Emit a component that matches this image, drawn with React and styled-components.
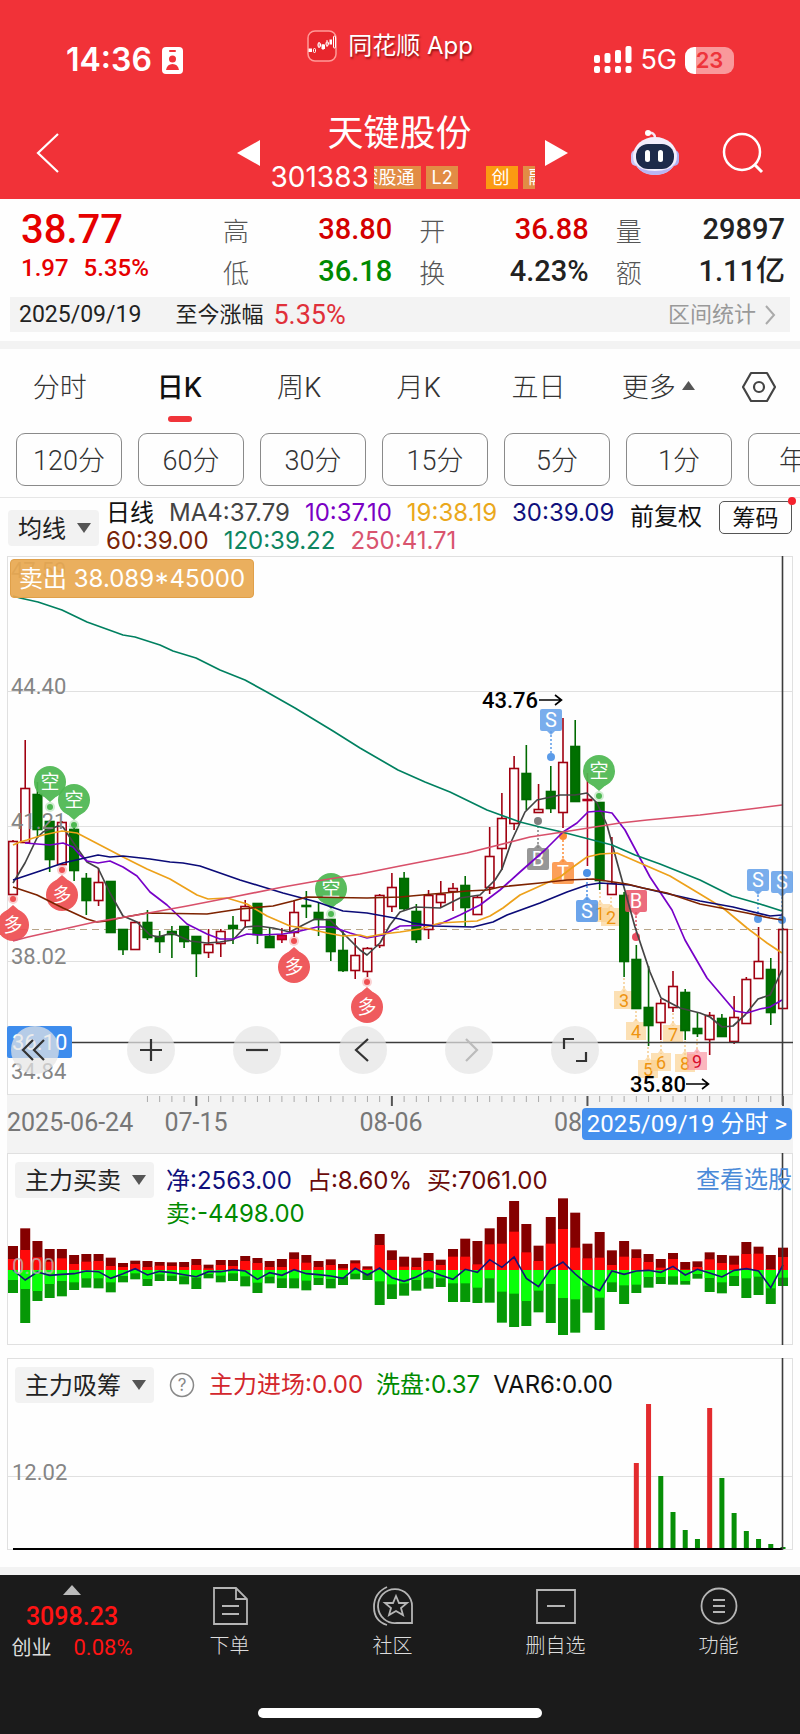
import { useState } from "react"
import styled, { createGlobalStyle, css } from "styled-components"

const UI = 'Inter, "Noto Sans CJK SC", sans-serif'
const NUM = 'Roboto, "Noto Sans CJK SC", sans-serif'

const RED = '#e60000'
const GREEN = '#008a00'

const quotes = [
  { label: '高', value: '38.80', color: '#d40000' },
  { label: '开', value: '36.88', color: '#d40000' },
  { label: '量', value: '29897' },
  { label: '低', value: '36.18', color: GREEN },
  { label: '换', value: '4.23%' },
  { label: '额', value: '1.11亿' },
]

const tabs = ['分时', '日K', '周K', '月K', '五日', '更多']
const periods = ['120分', '60分', '30分', '15分', '5分', '1分', '年K']

// high, body top, body bottom, low, kind (r = up, g = down, m = filled red)
const candles = [
  [840, 841, 895, 895, 'r'], [740, 788, 843, 843, 'r'], [782, 794, 830, 836, 'g'], [821, 821, 860, 872, 'g'],
  [821, 822, 865, 865, 'r'], [828, 829, 871, 881, 'g'], [873, 878, 901, 915, 'g'], [868, 882, 901, 906, 'r'],
  [881, 881, 933, 933, 'g'], [929, 929, 950, 955, 'g'], [921, 922, 950, 950, 'r'], [910, 922, 938, 940, 'g'],
  [931, 936, 942, 953, 'g'], [926, 931, 935, 958, 'g'], [926, 926, 942, 948, 'g'], [936, 936, 954, 977, 'g'],
  [929, 944, 953, 958, 'r'], [929, 931, 944, 957, 'r'], [916, 925, 929, 944, 'g'], [900, 906, 921, 928, 'r'],
  [903, 903, 935, 944, 'g'], [927, 936, 948, 948, 'g'], [928, 935, 940, 943, 'm'], [901, 912, 933, 937, 'r'],
  [891, 905, 907, 918, 'g'], [903, 912, 920, 936, 'g'], [919, 919, 952, 961, 'g'], [930, 950, 971, 972, 'g'],
  [938, 955, 971, 979, 'r'], [947, 948, 972, 977, 'r'], [894, 895, 946, 948, 'r'], [873, 887, 907, 912, 'r'],
  [872, 878, 909, 911, 'g'], [904, 911, 940, 943, 'g'], [890, 895, 930, 939, 'r'], [881, 894, 903, 908, 'r'],
  [883, 888, 892, 911, 'r'], [876, 885, 908, 926, 'g'], [895, 897, 915, 915, 'r'], [827, 856, 888, 894, 'r'],
  [793, 818, 849, 870, 'r'], [756, 768, 824, 830, 'r'], [745, 773, 800, 810, 'g'], [784, 809, 813, 813, 'r'],
  [766, 791, 809, 813, 'g'], [718, 762, 813, 828, 'r'], [720, 746, 802, 802, 'g'], [773, 799, 801, 866, 'm'],
  [802, 802, 881, 890, 'g'], [837, 883, 895, 895, 'r'], [892, 895, 962, 977, 'g'], [945, 959, 1009, 1009, 'g'],
  [966, 1007, 1026, 1046, 'g'], [999, 1003, 1023, 1040, 'r'], [971, 986, 1008, 1012, 'r'], [989, 992, 1031, 1040, 'g'],
  [1013, 1028, 1034, 1037, 'g'], [1012, 1015, 1040, 1055, 'r'], [1014, 1018, 1037, 1037, 'g'], [996, 1017, 1042, 1044, 'r'],
  [977, 979, 1024, 1024, 'r'], [927, 961, 979, 979, 'r'], [958, 969, 1013, 1025, 'g'], [928, 929, 1009, 1009, 'r'],
]

const averages = [
  { name: 'ma4', color: '#444', points: '13,883 25,863 37,838 43,832 58,826 63,827 75,845 87,862 98,868 110,893 123,916 137,922 150,935 158,937 172,933 190,941 207,943 220,942 233,940 245,927 258,926 273,928 290,932 303,925 315,919 330,920 345,935 360,950 367,955 380,943 390,925 400,912 415,907 440,908 460,898 480,895 495,880 502,869 512,840 525,812 537,800 560,795 575,795 587,793 597,803 607,825 617,862 635,927 650,972 661,998 680,1008 700,1013 710,1017 722,1027 733,1026 745,1015 758,999 770,995 775,985 782,970' },
  { name: 'ma10', color: '#7700c8', points: '25,843 50,845 63,843 73,847 80,855 87,861 98,863 110,861 123,867 137,876 150,892 167,905 187,924 207,934 220,939 233,939 247,934 260,935 283,934 300,931 317,927 333,927 350,933 367,938 383,935 400,926 433,925 440,924 460,915 480,905 500,890 520,872 545,850 563,832 577,823 588,812 600,811 612,813 625,830 650,877 672,910 685,940 707,978 735,1011 747,1013 760,1009 770,1007 782,1000' },
  { name: 'ma19', color: '#eda11a', points: '13,845 20,842 27,840 43,835 62,831 77,833 100,845 123,857 147,869 170,879 197,895 208,899 227,898 247,904 267,916 290,926 310,929 327,933 343,936 360,935 367,937 383,934 400,932 420,929 440,923 457,922 477,921 490,916 503,908 520,895 540,886 560,877 573,867 587,857 600,854 617,853 640,863 670,876 700,894 723,908 747,928 767,943 782,953' },
  { name: 'ma30', color: '#0b0b78', points: '13,880 40,871 63,863 98,855 110,857 123,856 150,859 170,862 183,863 200,866 240,880 260,886 283,893 317,902 343,911 367,913 400,919 413,923 433,926 473,927 493,922 507,915 540,903 567,892 587,885 600,883 630,885 660,892 700,901 733,907 770,916 782,915' },
  { name: 'ma60', color: '#7d2300', points: '13,887 37,895 63,908 87,919 97,922 107,921 120,918 147,913 207,914 220,912 240,909 273,906 293,901 307,897 367,898 400,897 433,894 467,891 487,890 500,887 540,883 567,880 593,879 627,884 643,888 667,893 700,904 747,913 770,918 782,920' },
  { name: 'ma120', color: '#008060', points: '13,596 20,598 38,602 62,610 87,622 123,635 135,637 160,645 173,651 196,658 220,670 245,680 265,691 295,708 333,731 360,748 398,770 425,782 450,792 487,810 520,822 540,827 562,832 585,838 612,845 635,855 660,864 700,880 732,896 760,904 782,911' },
  { name: 'ma250', color: '#d8506a', points: '13,941 28,937 95,922 143,914 187,906 233,897 283,887 317,881 360,874 400,866 467,853 530,837 563,832 620,823 647,820 700,815 750,809 782,805' },
]

const legend = [
  [
    { text: '日线', color: '#111' }, { text: 'MA4:37.79', color: '#444' }, { text: '10:37.10', color: '#7a00c4' },
    { text: '19:38.19', color: '#eaa81c' }, { text: '30:39.09', color: '#10107c' },
  ],
  [
    { text: '60:39.00', color: '#7a2408' }, { text: '120:39.22', color: '#0d8560' }, { text: '250:41.71', color: '#d9546e' },
  ],
]

const pins = [
  { x: 50, y: 782, dot: 807, up: true }, { x: 74, y: 800, dot: 825, up: true },
  { x: 331, y: 889, dot: 914, up: true }, { x: 599, y: 771, dot: 796, up: true },
  { x: 13, y: 925, dot: 899 }, { x: 62, y: 895, dot: 870 },
  { x: 294, y: 967, dot: 941 }, { x: 367, y: 1007, dot: 982 },
]

const trades = [
  { x: 551, y: 720, dot: 757, text: 'S', color: '#5b9be8' },
  { x: 538, y: 859, dot: 821, text: 'B', color: '#808080' },
  { x: 563, y: 873, dot: 836, text: 'T', color: '#fb8a35' },
  { x: 587, y: 911, dot: 873, text: 'S', color: '#4a90e6' },
  { x: 636, y: 901, dot: 937, text: 'B', color: '#e84c60' },
  { x: 758, y: 880, dot: 919, text: 'S', color: '#5b9be8' },
  { x: 782, y: 882, dot: 920, text: 'S', color: '#5b9be8' },
]

const counts = [
  { x: 600, y: 913, n: 1, from: 892 }, { x: 611, y: 917, n: 2, from: 897 }, { x: 624, y: 1000, n: 3, from: 978 },
  { x: 636, y: 1031, n: 4, from: 1011 }, { x: 648, y: 1069, n: 5, from: 1047 }, { x: 661, y: 1062, n: 6, from: 1041 },
  { x: 673, y: 1034, n: 7, from: 1013 }, { x: 685, y: 1063, n: 8, from: 1041 }, { x: 697, y: 1061, n: 9, from: 1039, hot: true },
]

// buy total, buy strong, sell strong, sell total, net line
const flows = [
  [72, 33, 30, 69, 0], [125, 60, 57, 159, 30], [87, 38, 63, 93, 6], [63, 25, 42, 84, 16], [63, 35, 33, 79, 13],
  [45, 18, 37, 60, 11], [48, 25, 25, 53, 3], [48, 27, 25, 55, 5], [37, 12, 37, 67, 25], [21, 9, 18, 37, 11],
  [28, 18, 10, 28, -4], [27, 9, 27, 48, 15], [24, 13, 13, 33, 4], [23, 12, 17, 33, 8], [24, 9, 19, 43, 14],
  [33, 15, 23, 57, 20], [16, 5, 12, 25, 5], [30, 15, 17, 37, 5], [30, 12, 10, 33, -1], [42, 27, 19, 49, 3],
  [36, 21, 38, 69, 28], [27, 9, 20, 40, 8], [33, 9, 25, 54, 16], [53, 33, 25, 55, -1], [45, 22, 32, 61, 11],
  [27, 9, 24, 45, 14], [32, 15, 27, 55, 18], [18, 5, 21, 45, 25], [29, 20, 11, 28, -5], [11, 4, 11, 30, 15],
  [108, 75, 34, 105, -6], [59, 30, 43, 87, 23], [40, 10, 40, 77, 34], [37, 9, 30, 62, 21], [51, 27, 23, 56, 1],
  [31, 15, 25, 51, 16], [63, 40, 40, 96, 28], [94, 40, 40, 96, -2], [87, 17, 53, 99, 7], [125, 77, 25, 98, -31],
  [159, 79, 65, 158, -8], [207, 115, 71, 171, -39], [138, 53, 93, 168, 25], [73, 27, 62, 127, 50], [159, 79, 42, 159, -3],
  [215, 123, 84, 195, -24], [172, 67, 88, 188, 12], [79, 35, 47, 128, 43], [114, 37, 83, 180, 62], [59, 15, 37, 66, 3],
  [87, 40, 46, 102, 13], [62, 36, 44, 69, 3], [48, 24, 21, 53, 1], [33, 7, 21, 42, 7], [51, 33, 19, 44, -11],
  [24, 2, 33, 44, 15], [26, 9, 12, 26, -2], [53, 32, 24, 66, 9], [45, 21, 37, 70, 21], [43, 16, 18, 48, 1],
  [84, 48, 25, 84, -4], [70, 49, 20, 75, 3], [45, 3, 55, 102, 53], [67, 39, 23, 48, -15],
]

const absorb = [
  [86, 'r'], [145, 'r'], [73, 'g'], [37, 'g'], [19, 'g'], [10, 'g'], [141, 'r'],
  [71, 'g'], [36, 'g'], [18, 'g'], [10, 'g'], [5, 'g'], [2, 'g'],
]

const STEP = 770 / 63
const px = i => 13 + i * STEP

const GlobalStyle = createGlobalStyle`
  * { box-sizing: border-box; }
  body { margin: 0; background: #fefefe; font-family: ${UI}; color: #222; }
  button, select { font: inherit; color: inherit; border: 0; background: none; padding: 0; cursor: pointer; }
  svg { display: block; }
`

const Header = styled.header`
  background: #f13238;
  color: #fff;
  height: 199px;
`
const StatusBar = styled.div`
  display: grid;
  grid-template-columns: 1fr auto 1fr;
  align-items: start;
  height: 110px;
  padding: 30px 62px 0 42px;
`
const Clock = styled.div`
  display: flex;
  align-items: center;
  gap: 10px;
  padding: 12px 0 0 24px;
  font-size: 32px;
  line-height: 36px;
  font-weight: 600;
`
const AppMark = styled.div`
  display: flex;
  align-items: center;
  gap: 11px;
  font-size: 24px;
  line-height: 32px;
  text-shadow: 1px 2px 2px rgba(90, 0, 0, .6);
`
const Signals = styled.div`
  display: flex;
  align-items: center;
  justify-content: flex-end;
  gap: 8px;
  padding: 12px 4px 0 0;
  font-size: 27px;
  line-height: 36px;
`
const Battery = styled.div`
  width: 49px;
  height: 27px;
  border-radius: 9px;
  background: linear-gradient(90deg, #fff 11px, #f9999b 11px);
  color: #ee343b;
  font-size: 22px;
  line-height: 27px;
  font-weight: 600;
  text-align: center;
`
const TitleRow = styled.div`
  display: grid;
  grid-template-columns: 235px 1fr 230px;
  align-items: center;
  height: 86px;
`
const Stock = styled.div`
  display: flex;
  align-items: center;
  justify-content: space-between;
`
const StockName = styled.h1`
  margin: 0 0 4px;
  padding-right: 6px;
  font-size: 36px;
  line-height: 44px;
  font-weight: 400;
  text-align: center;
`
const StockCode = styled.div`
  display: flex;
  align-items: center;
  width: 264px;
  height: 36px;
  gap: 2px;
  font-size: 28px;
`
const Tags = styled.div`
  display: flex;
  justify-content: flex-end;
  flex: 1;
  overflow: hidden;
`
const Tag = styled.span`
  flex: none;
  background: ${p => p.$hot ? '#fb9a12' : '#e28c45'};
  margin-left: ${p => p.$far ? 28 : 5}px;
  padding: 0 6px;
  width: ${p => p.$width}px;
  overflow: hidden;
  white-space: nowrap;
  direction: ${p => p.$clip ? 'rtl' : 'ltr'};
  font-size: 18px;
  line-height: 23px;
`
const IconButton = styled.button`
  display: flex;
  align-items: center;
`
const HeaderTools = styled.div`
  display: flex;
  align-items: center;
  justify-content: flex-end;
  gap: 42px;
  padding-right: 36px;
`
const BackWrap = styled.div`
  padding-left: 36px;
`

const Quote = styled.section`
  padding: 4px 10px 9px;
  border-bottom: 8px solid #f3f3f3;
`
const QuoteGrid = styled.div`
  display: grid;
  grid-template-columns: 186px 1fr;
  column-gap: 27px;
  height: 94px;
  padding-right: 5px;
`
const Price = styled.div`
  padding: 5px 0 0 11px;
  color: ${RED};
  font-family: ${NUM};
  font-weight: 500;
  font-size: 40px;
  line-height: 44px;
`
const Change = styled.div`
  display: flex;
  gap: 15px;
  font-size: 24px;
  line-height: 32px;
`
const Figures = styled.dl`
  display: grid;
  grid-template-columns: repeat(3, 1fr);
  column-gap: 27px;
  align-content: start;
  margin: 5px 0 0;
`
const Figure = styled.div`
  display: flex;
  justify-content: space-between;
  align-items: center;
  height: 42px;
  dt { color: #555; font-size: 26px; font-weight: 300; }
  dd {
    margin: 0;
    font-family: ${NUM};
    font-size: 29px;
    line-height: 40px;
    font-weight: 500;
    color: ${p => p.$color || '#222'};
  }
`
const SinceStrip = styled.div`
  display: flex;
  align-items: center;
  height: 35px;
  padding: 0 14px 0 9px;
  background: #f3f3f3;
  font-family: ${NUM};
  font-size: 22px;
  line-height: 32px;
  color: #222;
  time { font-size: 23px; margin-right: 34px; }
  em { font-style: normal; color: #e0303a; margin-left: 10px; font-size: 27px; }
  button { display: flex; align-items: center; gap: 8px; margin-left: auto; color: #999; }
`
const TabBar = styled.nav`
  display: flex;
  height: 84px;
  padding-top: 10px;
`
const Tab = styled.button`
  position: relative;
  flex: 1;
  height: 52px;
  display: flex;
  align-items: center;
  justify-content: center;
  gap: 6px;
  font-size: 27px;
  font-weight: ${p => p.$active ? 500 : 300};
  color: ${p => p.$active ? '#111' : '#333'};
  ${p => p.$active && css`
    &::after {
      content: '';
      position: absolute;
      bottom: -11px;
      width: 24px;
      height: 6px;
      border-radius: 3px;
      background: #f0343a;
    }
  `}
`
const TabSettings = styled.button`
  width: 82px;
  height: 56px;
  display: flex;
  align-items: center;
  justify-content: center;
`
const Periods = styled.div`
  display: flex;
  gap: 16px;
  padding: 0 0 11px 16px;
  overflow: hidden;
  border-bottom: 1px solid #e6e6e6;
`
const Period = styled.button`
  flex: none;
  width: 106px;
  height: 53px;
  padding-bottom: 3px;
  border: 1px solid #8a8a8a;
  border-radius: 9px;
  color: #333;
  font-family: ${NUM};
  font-size: 27px;
  font-weight: 300;
`
const LegendBar = styled.div`
  display: flex;
  align-items: flex-start;
  height: 58px;
  padding: 1px 8px 0 8px;
`
const Picker = styled.label`
  display: grid;
  align-items: center;
  flex: none;
  height: 36px;
  margin-top: ${p => p.$drop || 0}px;
  background: #f2f2f2;
  border-radius: 4px;
  > * { grid-area: 1 / 1; }
  select {
    appearance: none;
    height: 36px;
    padding: 0 33px 0 10px;
    font-size: 24px;
    color: #222;
    outline: none;
  }
  svg { justify-self: end; margin-right: 8px; pointer-events: none; }
`
const Legend = styled.div`
  flex: 1;
  min-width: 0;
  padding-left: 7px;
`
const LegendRow = styled.div`
  display: flex;
  gap: ${p => p.$gap || 15}px;
  font-size: 24px;
  line-height: ${p => p.$line || 28}px;
  white-space: nowrap;
`
const Ink = styled.span`
  color: ${p => p.$color};
`
const Adjust = styled.button`
  font-size: 24px;
  line-height: 36px;
  color: #111;
  white-space: nowrap;
`
const Chips = styled.button`
  position: relative;
  flex: none;
  width: 73px;
  height: 33px;
  margin: 2px 0 0 17px;
  border: 1px solid #555;
  border-radius: 5px;
  font-size: 23px;
  line-height: 30px;
  color: #111;
  &::after {
    content: '';
    position: absolute;
    top: -5px;
    right: -5px;
    width: 8px;
    height: 8px;
    border-radius: 50%;
    background: #f5222d;
  }
`
const Chart = styled.section`
  position: relative;
  svg { width: 100%; height: auto; }
  svg text { font-family: ${NUM}; }
`
const SellBadge = styled.div`
  position: absolute;
  top: 3px;
  left: 10px;
  height: 39px;
  padding: 0 8px;
  border-radius: 4px;
  background: rgba(232, 168, 80, .92);
  border: 1px solid #e0a04a;
  color: #fff;
  font-size: 24px;
  line-height: 37px;
`
const ChartTools = styled.div`
  position: absolute;
  left: 11px;
  bottom: 79px;
  display: flex;
  gap: 58px;
`
const RoundButton = styled.button`
  width: 48px;
  height: 48px;
  border-radius: 50%;
  background: rgba(228, 228, 228, .72);
  display: flex;
  align-items: center;
  justify-content: center;
  margin-right: ${p => p.$wide ? 10 : 0}px;
  svg { width: 30px; height: 30px; }
`
const DateLink = styled.button`
  position: absolute;
  right: 8px;
  bottom: 13px;
  height: 32px;
  padding: 0 5px;
  border-radius: 4px;
  background: #4490ee;
  color: #fff;
  font-family: ${NUM};
  font-size: 24px;
  line-height: 30px;
  white-space: nowrap;
`
const Panel = styled.section`
  display: grid;
  margin-bottom: 12px;
  > * { grid-area: 1 / 1; min-width: 0; }
  > svg { width: 100%; height: auto; }
  > svg text { font-family: ${NUM}; }
`
const PanelHead = styled.div`
  display: flex;
  align-items: flex-start;
  padding: 9px 8px 0 15px;
  a { margin-left: auto; color: #4a8ad8; font-size: 24px; line-height: 36px; text-decoration: none; }
`
const PanelLegend = styled.div`
  padding-left: 12px;
  padding-top: ${p => p.$drop || 0}px;
`
const Footer = styled.footer`
  margin-top: 17px;
  background: #1b1b1b;
  border-top: 8px solid #f3f3f3;
  color: #ddd;
  height: 167px;
`
const FooterNav = styled.nav`
  display: grid;
  grid-template-columns: 148px repeat(4, 1fr);
  height: 133px;
`
const NavItem = styled.button`
  display: flex;
  flex-direction: column;
  align-items: center;
  gap: 7px;
  padding-top: 11px;
  font-size: 20px;
  line-height: 26px;
  font-weight: 300;
`
const IndexItem = styled.button`
  display: flex;
  flex-direction: column;
  align-items: center;
  padding: 10px 4px 0 0;
  font-size: 20px;
  font-family: ${NUM};
  b { margin-top: 5px; font-size: 25px; line-height: 34px; font-weight: 500; color: #ff1414; }
  div { display: flex; gap: 22px; line-height: 28px; }
  span { color: #ff1414; font-size: 22px; }
`
const HomeBar = styled.div`
  width: 284px;
  height: 10px;
  margin: 0 auto;
  border-radius: 5px;
  background: #fff;
`

const Arrow = () => (
  <svg width="14" height="10" viewBox="0 0 14 10"><path d="M0 0H14L7 10Z" fill="#555" /></svg>
)

const DropDown = ({ label, drop }) => (
  <Picker $drop={drop}>
    <select aria-label={label}>
      <option>{label}</option>
    </select>
    <Arrow />
  </Picker>
)

const RobotIcon = () => (
  <svg width="50" height="48" viewBox="0 0 50 48">
    <path d="M18 4q7-1 7 5" fill="none" stroke="#f7e6f5" strokeWidth="2.5" strokeLinecap="round" />
    <circle cx="18" cy="4" r="3" fill="#fff" />
    <rect x="1" y="21" width="10" height="16" rx="5" fill="#c9c5f5" />
    <rect x="39" y="21" width="10" height="16" rx="5" fill="#aeb0f2" />
    <ellipse cx="25" cy="27" rx="22" ry="19" fill="#f3eefc" />
    <path d="M5 34q5 12 20 12t20-12q-5 8-20 8T5 34Z" fill="#b9b6f4" />
    <rect x="6" y="15" width="38" height="25" rx="12" fill="#1d2a4a" />
    <rect x="15" y="21" width="5" height="12" rx="2.5" fill="#fff" />
    <rect x="28" y="21" width="5" height="12" rx="2.5" fill="#fff" />
  </svg>
)

const Candle = ({ i, data }) => {
  const [high, top, bottom, low, kind] = data
  const x = px(i)
  const color = kind === 'g' ? '#006a00' : kind === 'm' ? '#b0001c' : '#a00010'
  return (
    <g stroke={color} strokeWidth="1.6">
      <line x1={x} x2={x} y1={high} y2={top} />
      <line x1={x} x2={x} y1={bottom} y2={low} />
      <rect x={x - 4.3} y={top + 0.5} width="8.6" height={Math.max(bottom - top - 1, 1)}
        fill={kind === 'g' ? '#007000' : kind === 'm' ? '#e0004a' : '#fff'} />
    </g>
  )
}

const Pin = ({ x, y, dot, up }) => {
  const color = up ? '#4db851' : '#ee4f52'
  const s = up ? 1 : -1
  return (
    <g>
      <g fill={color} opacity="0.93">
        <circle cx={x} cy={y} r="16" />
        <path d={`M${x - 8} ${y + 13 * s}L${x} ${y + 20 * s}L${x + 8} ${y + 13 * s}Z`} />
      </g>
      <circle cx={x} cy={dot} r="5" fill={color} opacity="0.25" />
      <circle cx={x} cy={dot} r="3" fill={color} />
      <text x={x} y={y + 7} textAnchor="middle" fontSize="19" fill="#fff">{up ? '空' : '多'}</text>
    </g>
  )
}

const Trade = ({ x, y, dot, text, color }) => {
  const s = dot > y ? 1 : -1
  return (
    <g>
      <line x1={x} x2={x} y1={y + 11 * s} y2={dot} stroke={color} strokeDasharray="2 2" strokeWidth="1.5" />
      <circle cx={x} cy={dot} r="4" fill={color} />
      <rect x={x - 11} y={y - 11} width="22" height="22" rx="2" fill={color} opacity="0.82" />
      <path d={`M${x - 4} ${y + 11 * s}L${x} ${y + 15 * s}L${x + 4} ${y + 11 * s}Z`} fill={color} opacity="0.82" />
      <text x={x} y={y + 7} textAnchor="middle" fontSize="20" fill="#fff">{text}</text>
    </g>
  )
}

const Count = ({ x, y, n, from, hot }) => (
  <g>
    <line x1={x} x2={x} y1={from} y2={y - 8} stroke="#f0b45a" strokeDasharray="2 2" />
    <path d={`M${x - 10} ${y - 9}h7l3-4l3 4h7v18h-20Z`} fill={hot ? '#f98f9b' : '#fbd08c'} opacity="0.65" />
    <text x={x} y={y + 7} textAnchor="middle" fontSize="18" fill={hot ? '#d8102c' : '#ee9410'}>{n}</text>
  </g>
)

const KLine = () => (
  <svg viewBox="0 556 800 597" role="img" aria-label="日K">
    <defs>
      <clipPath id="plot"><rect x="0" y="556" width="793" height="597" /></clipPath>
    </defs>
    <rect x="7" y="1094" width="786" height="59" fill="#f3f3f3" />
    <g stroke="#e0e0e0" strokeWidth="1">
      <path d="M7 556.500H793M7 691.500H793M7 826.500H793M7 961.500H793M7 1094.500H793" />
      <path d="M7.500 556V1094M792.500 556V1094" />
    </g>
    <line x1="8" x2="793" y1="929.500" y2="929.500" stroke="#b7a488" strokeDasharray="7 5" strokeWidth="1" />
    <g clipPath="url(#plot)">
      {counts.map(c => <Count key={c.n} {...c} />)}
      {candles.map((c, i) => <Candle key={i} i={i} data={c} />)}
      {trades.map(t => <Trade key={`${t.x}${t.text}`} {...t} />)}
      {pins.map(p => <Pin key={p.x} {...p} />)}
      <g fill="none" strokeWidth="1.7" strokeLinejoin="round">
        {averages.map(a => <polyline key={a.name} points={a.points} stroke={a.color} />)}
      </g>
    </g>
    <g fontSize="22" fill="#858585">
      <text x="11" y="578">47.59</text>
      <text x="11" y="694">44.40</text>
      <text x="11" y="829">41.21</text>
      <text x="11" y="964">38.02</text>
      <text x="11" y="1079">34.84</text>
    </g>
    <path d="M8 1042.500H793M782.500 556V1105" stroke="#3c3c3c" strokeWidth="1.6" />
    <rect x="7" y="1026" width="65" height="32" rx="2" fill="#3d8ced" />
    <text x="12" y="1050" fontSize="22" fill="#fff">36.10</text>
    <g fontSize="22" fontWeight="500" fill="#000">
      <text x="482" y="708">43.76</text>
      <text x="630" y="1092">35.80</text>
    </g>
    <g fill="none" stroke="#000" strokeWidth="1.6">
      <path d="M539 700H561M555 695L561.500 700L555 705" />
      <path d="M686 1084H708M702 1079L708.500 1084L702 1089" />
    </g>
    {candles.map((c, i) => i > 10 && (
      <line key={i} x1={px(i)} x2={px(i)} y1="1096" y2={i % 16 === 15 ? 1106 : 1102}
        stroke={i % 16 === 15 ? '#555' : '#aaa'} strokeWidth={i % 16 === 15 ? 2 : 1} />
    ))}
    <g fontSize="25" fill="#777">
      <text x="7" y="1131">2025-06-24</text>
      <text x="196" y="1131" textAnchor="middle">07-15</text>
      <text x="391" y="1131" textAnchor="middle">08-06</text>
      <text x="554" y="1131">08</text>
    </g>
  </svg>
)

const FlowChart = () => (
  <svg viewBox="0 0 800 193" role="img" aria-label="主力买卖">
    <rect x="7.500" y="0.500" width="785" height="191" fill="none" stroke="#e0e0e0" />
    {flows.map(([bt, bs, ss, st], i) => (
      <g key={i}>
        <rect x={px(i) - 5} y={117 - bt / 3} width="10" height={bt / 3} fill="#850000" />
        <rect x={px(i) - 5} y={117 - bs / 3} width="10" height={bs / 3} fill="#ff0a0a" />
        <rect x={px(i) - 5} y="117" width="10" height={st / 3} fill="#069806" />
        <rect x={px(i) - 5} y="117" width="10" height={ss / 3} fill="#0aff0a" />
      </g>
    ))}
    <polyline points={flows.map((f, i) => `${px(i)},${117 + f[4] / 3}`).join(' ')} fill="none" stroke="#141478" strokeWidth="1.6" />
    <text x="12" y="121" fontSize="22" fill="#bbb" opacity="0.75">0.00</text>
    <path d="M782.500 0V192" stroke="#3c3c3c" strokeWidth="1.6" />
  </svg>
)

const AbsorbChart = () => (
  <svg viewBox="0 0 800 192" role="img" aria-label="主力吸筹">
    <rect x="7.500" y="0.500" width="785" height="191" fill="none" stroke="#e0e0e0" />
    <path d="M8 118.500H793" stroke="#e0e0e0" />
    <text x="12" y="122" fontSize="22" fill="#858585">12.02</text>
    {absorb.map(([h, kind], i) => (
      <rect key={i} x={px(i + 51) - 2.5} y={191 - h} width="5" height={h} fill={kind === 'r' ? '#e32b2e' : '#078f07'} />
    ))}
    <path d="M13 191H783" stroke="#000" strokeWidth="2" />
    <path d="M782.500 0V192" stroke="#3c3c3c" strokeWidth="1.6" />
  </svg>
)

const navItems = [
  { label: '下单', icon: <path d="M4 1H26L37 12V37H4ZM26 1V12H37M12 19H29M12 27H29" /> },
  { label: '社区', icon: <><path d="M14 0Q1 6 1 20T14 38M39 36H24A17 17 0 1 1 39 20Z" /><path d="M23 9L26 16H34L28 21L30 28L23 24L16 28L18 21L12 16H20Z" /></> },
  { label: '删自选', icon: <path d="M1 3H39V36H1ZM11 19H29" /> },
  { label: '功能', icon: <><circle cx="20" cy="19" r="17.500" /><path d="M14 13H26M14 19H26M14 25H26" /></> },
]

const tools = [
  { label: '最左', d: 'M13 5L3 15L13 25M24 5L14 15L24 25' },
  { label: '放大', d: 'M4 15H26M15 4V26' },
  { label: '缩小', d: 'M4 15H26' },
  { label: '左移', d: 'M20 4L8 15L20 26' },
  { label: '右移', d: 'M12 4L23 15L12 26', off: true },
  { label: '全屏', d: 'M4 14V4H14M26 17V26H16' },
]

const App = () => {

  const [tab, setTab] = useState('日K')

  return (
    <main>
      <GlobalStyle />
      <Header>
        <StatusBar>
          <Clock>
            14:36
            <svg width="21" height="27" viewBox="0 0 21 27">
              <rect width="21" height="27" rx="4" fill="#fff" />
              <rect x="7" y="3" width="7" height="2" rx="1" fill="#f13238" />
              <circle cx="10.500" cy="12" r="3.500" fill="#f13238" />
              <path d="M4 23q1-6 6.500-6t6.500 6Z" fill="#f13238" />
            </svg>
          </Clock>
          <AppMark>
            <svg width="30" height="32" viewBox="0 0 30 32">
              <rect x="1" y="1" width="28" height="30" rx="7" fill="#e8262d" stroke="#ff9a98" strokeWidth="1.500" />
              <g fill="none" stroke="#fff" strokeWidth="1">
                <path d="M12 12v6M16 14v6M20 10v7" />
                <rect x="2" y="19" width="2.500" height="2.500" fill="#fff" />
                <rect x="6.500" y="18.500" width="2" height="4" rx="1" />
                <rect x="11" y="13" width="2.500" height="4" rx="1" />
                <rect x="15" y="15" width="2.500" height="3.500" fill="#fff" />
                <rect x="19" y="12" width="2.500" height="3.500" rx="1" />
                <rect x="23" y="10" width="1.500" height="4" fill="#fff" />
                <rect x="26.500" y="6" width="2" height="12" rx="1" />
              </g>
            </svg>
            同花顺 App
          </AppMark>
          <Signals>
            <svg width="38" height="28" viewBox="0 0 38 28" fill="#fff">
              <rect x="0" y="9" width="6" height="8" rx="2" />
              <rect x="10.500" y="7" width="6" height="10" rx="2" />
              <rect x="21" y="4" width="6" height="13" rx="2" />
              <rect x="31.500" y="0" width="6" height="17" rx="2" />
              <rect x="0" y="20" width="6" height="7" rx="2" />
              <rect x="10.500" y="20" width="6" height="7" rx="2" />
              <rect x="21" y="20" width="6" height="7" rx="2" />
              <rect x="31.500" y="20" width="6" height="7" rx="2" />
            </svg>
            5G
            <Battery>23</Battery>
          </Signals>
        </StatusBar>
        <TitleRow>
          <BackWrap>
            <IconButton aria-label="返回">
              <svg width="25" height="42" viewBox="0 0 25 42"><path d="M22 2L2 21L22 40" fill="none" stroke="#fff" strokeWidth="2.200" /></svg>
            </IconButton>
          </BackWrap>
          <Stock>
            <IconButton aria-label="上一只">
              <svg width="26" height="26" viewBox="0 0 26 26"><path d="M25 0V26L2 13Z" fill="#fff" /></svg>
            </IconButton>
            <div>
              <StockName>天键股份</StockName>
              <StockCode>
                301383
                <Tags>
                  <Tag $clip $width={47}>深股通</Tag>
                  <Tag $width={32}>L2</Tag>
                  <Tag $hot $far $width={32}>创</Tag>
                  <Tag $width={12}>融</Tag>
                </Tags>
              </StockCode>
            </div>
            <IconButton aria-label="下一只">
              <svg width="26" height="26" viewBox="0 0 26 26"><path d="M1 0V26L24 13Z" fill="#fff" /></svg>
            </IconButton>
          </Stock>
          <HeaderTools>
            <IconButton aria-label="助手"><RobotIcon /></IconButton>
            <IconButton aria-label="搜索">
              <svg width="42" height="42" viewBox="0 0 42 42" fill="none" stroke="#fff" strokeWidth="2.500">
                <circle cx="20" cy="20" r="18" /><path d="M33 33L40 40" strokeWidth="3" />
              </svg>
            </IconButton>
          </HeaderTools>
        </TitleRow>
      </Header>

      <Quote>
        <QuoteGrid>
          <Price>
            38.77
            <Change><span>1.97</span><span>5.35%</span></Change>
          </Price>
          <Figures>
            {quotes.map(q => (
              <Figure key={q.label} $color={q.color}><dt>{q.label}</dt><dd>{q.value}</dd></Figure>
            ))}
          </Figures>
        </QuoteGrid>
        <SinceStrip>
          <time>2025/09/19</time>
          至今涨幅
          <em>5.35%</em>
          <button>
            区间统计
            <svg width="12" height="20" viewBox="0 0 12 20"><path d="M2 1L10 10L2 19" fill="none" stroke="#aaa" strokeWidth="2" /></svg>
          </button>
        </SinceStrip>
      </Quote>

      <TabBar>
        {tabs.map(t => (
          <Tab key={t} $active={t === tab} onClick={() => setTab(t)}>
            {t}
            {t === '更多' && <svg width="13" height="9" viewBox="0 0 13 9"><path d="M0 9H13L6.500 0Z" fill="#555" /></svg>}
          </Tab>
        ))}
        <TabSettings aria-label="设置">
          <svg width="36" height="32" viewBox="0 0 36 32" fill="none" stroke="#444" strokeWidth="2.200">
            <path d="M10 2H26L34 16L26 30H10L2 16Z" strokeLinejoin="round" /><circle cx="18" cy="16" r="5" />
          </svg>
        </TabSettings>
      </TabBar>
      <Periods>
        {periods.map(p => <Period key={p}>{p}</Period>)}
      </Periods>

      <LegendBar>
        <DropDown label="均线" drop={11} />
        <Legend>
          {legend.map((row, i) => (
            <LegendRow key={i}>
              {row.map(l => <Ink key={l.text} $color={l.color}>{l.text}</Ink>)}
            </LegendRow>
          ))}
        </Legend>
        <Adjust>前复权</Adjust>
        <Chips>筹码</Chips>
      </LegendBar>

      <Chart>
        <KLine />
        <SellBadge>卖出 38.089*45000</SellBadge>
        <ChartTools>
          {tools.map((t, i) => (
            <RoundButton key={t.label} aria-label={t.label} $wide={i === 0} disabled={t.off}>
              <svg viewBox="0 0 30 30" fill="none" stroke={t.off ? '#bbb' : '#333'} strokeWidth="2.200"><path d={t.d} /></svg>
            </RoundButton>
          ))}
        </ChartTools>
        <DateLink>2025/09/19 分时 &gt;</DateLink>
      </Chart>

      <Panel>
        <FlowChart />
        <PanelHead>
          <DropDown label="主力买卖" />
          <PanelLegend $drop={2}>
            <LegendRow $line={33}>
              <Ink $color="#10107c">净:2563.00</Ink>
              <Ink $color="#6a0a0a">占:8.60%</Ink>
              <Ink $color="#6a0a0a">买:7061.00</Ink>
            </LegendRow>
            <LegendRow $line={33}>
              <Ink $color={GREEN}>卖:-4498.00</Ink>
            </LegendRow>
          </PanelLegend>
          <a href="#pick">查看选股</a>
        </PanelHead>
      </Panel>

      <Panel>
        <AbsorbChart />
        <PanelHead>
          <DropDown label="主力吸筹" />
          <PanelLegend>
            <LegendRow $gap={13} $line={36}>
              <svg width="30" height="36" viewBox="0 0 30 36">
                <circle cx="16" cy="18" r="11.500" fill="none" stroke="#888" strokeWidth="1.500" />
                <text x="16" y="24" textAnchor="middle" fontSize="17" fill="#888">?</text>
              </svg>
              <Ink $color="#d3262c">主力进场:0.00</Ink>
              <Ink $color={GREEN}>洗盘:0.37</Ink>
              <Ink $color="#111">VAR6:0.00</Ink>
            </LegendRow>
          </PanelLegend>
        </PanelHead>
      </Panel>

      <Footer>
        <FooterNav>
          <IndexItem>
            <svg width="18" height="10" viewBox="0 0 18 10"><path d="M0 10H18L9 0Z" fill="#bbb" /></svg>
            <b>3098.23</b>
            <div>创业 <span>0.08%</span></div>
          </IndexItem>
          {navItems.map(n => (
            <NavItem key={n.label}>
              <svg width="40" height="40" viewBox="0 -1 40 40" fill="none" stroke="#b5b5b5" strokeWidth="1.800">{n.icon}</svg>
              {n.label}
            </NavItem>
          ))}
        </FooterNav>
        <HomeBar />
      </Footer>
    </main>
  )
}
export default App
